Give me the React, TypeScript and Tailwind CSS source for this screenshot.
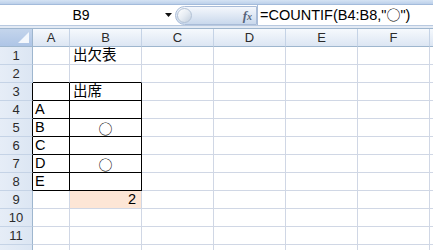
const cols = ["A", "B", "C", "D", "E", "F", "G"];
const colWidths = ["w-[37px]", "w-[72px]", "w-[72px]", "w-[72px]", "w-[72px]", "w-[72px]", "w-[72px]"];

type Cell = { text: string; align: "left" | "center" | "right"; circle?: boolean };

const data: Record<string, Cell> = {
  B1: { text: "出欠表", align: "left" },
  B3: { text: "出席", align: "left" },
  A4: { text: "A", align: "left" },
  A5: { text: "B", align: "left" },
  B5: { text: "○", align: "center", circle: true },
  A6: { text: "C", align: "left" },
  A7: { text: "D", align: "left" },
  B7: { text: "○", align: "center", circle: true },
  A8: { text: "E", align: "left" },
  B9: { text: "2", align: "right" },
};

const rows = Array.from({ length: 12 }, (_, i) => i + 1);

function inTable(col: number, row: number) {
  return col <= 1 && row >= 3 && row <= 8;
}

function SheetCell({ col, row }: { col: number; row: number }) {
  const key = cols[col] + row;
  const cell = data[key];
  const right = inTable(col, row) ? "border-r-black" : "border-r-[#d0d7e5]";
  const bottom =
    col <= 1 && row >= 2 && row <= 8 ? "border-b-black" : "border-b-[#d0d7e5]";
  const fill = key === "B9" ? "bg-[#fde6d6]" : "bg-white";
  const align =
    cell?.align === "right"
      ? "items-end justify-end pr-[5px]"
      : cell?.align === "center"
      ? "items-center justify-center"
      : col === 0
      ? "items-end justify-start pl-[2px]"
      : "items-end justify-start pl-[3px]";
  return (
    <div
      className={`${colWidths[col]} shrink-0 h-[18px] border-r border-b ${right} ${bottom} ${fill} flex ${align}`}
    >
      {cell && (
        <span
          className={
            cell.circle
              ? "text-[14px] leading-[16px] text-black font-['Noto_Sans_CJK_JP',sans-serif]"
              : "text-[14.5px] leading-[17px] text-black font-['Liberation_Sans','Noto_Sans_CJK_JP',sans-serif]"
          }
        >
          {cell.text}
        </span>
      )}
    </div>
  );
}

export default function App() {
  return (
    <div className="w-[433px] h-[250px] overflow-hidden bg-white font-['Liberation_Sans','Noto_Sans_CJK_JP',sans-serif]">
      {/* ribbon edge */}
      <div className="h-[5px] bg-gradient-to-b from-[#d5e3f4] to-[#bcd0ea] border-b border-[#a3bbdb]" />

      {/* formula bar */}
      <div className="h-[20px] flex items-center bg-white">
        <div className="w-[162px] h-full flex items-center justify-center text-[14px] text-black">
          B9
        </div>
        <div className="w-[13px] h-full flex items-center justify-center">
          <svg width="7" height="4" viewBox="0 0 7 4">
            <path d="M0 0 H7 L3.5 4 Z" fill="#111" />
          </svg>
        </div>
        <div className="w-[82px] h-[19px] rounded-l-full border border-[#a9bcd8] bg-gradient-to-b from-[#f4f7fc] via-[#dfe8f4] to-[#c9d8ec] flex items-center relative">
          <div className="ml-[1px] w-[15px] h-[15px] rounded-full border border-[#b3c2d6] bg-gradient-to-br from-[#ffffff] via-[#e6ecf3] to-[#c2cedd]" />
          <span className="absolute right-[4px] top-[0px] text-[13px] italic font-bold text-[#56647a] font-['Liberation_Serif',serif] leading-[17px]">
            f<span className="text-[10px]">x</span>
          </span>
        </div>
        <div className="flex-1 h-full border-l border-[#a9bcd8] flex items-center pl-[2px] text-[14.5px] leading-[18px] text-black whitespace-nowrap">
          =COUNTIF(B4:B8,"<span className="inline-block font-['Noto_Sans_CJK_JP',sans-serif] text-[14px] leading-[14px] -translate-y-[1px]">○</span>")
        </div>
      </div>

      {/* separator */}
      <div className="h-[4px] bg-[#e3eaf4] border-t border-[#b8c9e0] border-b border-b-[#9eb6ce]" />

      {/* column headers */}
      <div className="flex h-[18px]">
        <div className="w-[33px] shrink-0 h-full border-r border-b border-[#9eb6ce] bg-gradient-to-b from-[#c4d5ec] to-[#aec5e6] relative overflow-hidden">
          <svg className="absolute right-[3px] bottom-[3px]" width="11" height="11" viewBox="0 0 11 11">
            <path d="M11 0 V11 H0 Z" fill="#f4f8fd" />
          </svg>
        </div>
        {cols.map((c, i) => (
          <div
            key={c}
            className={`${colWidths[i]} shrink-0 h-full border-r border-b border-r-[#c5d3e6] border-b-[#9eb6ce] bg-gradient-to-b from-[#f6f9fd] to-[#dce6f3] flex items-center justify-center text-[13px] text-[#2b2b2b]`}
          >
            {i < 6 ? c : ""}
          </div>
        ))}
      </div>

      {/* rows */}
      {rows.map((r) => (
        <div key={r} className="flex h-[18px]">
          <div
            className={`w-[33px] shrink-0 h-full border-b border-r border-b-[#c5d3e6] ${
              r >= 3 && r <= 8 ? "border-r-black" : "border-r-[#9eb6ce]"
            } bg-gradient-to-r from-[#e6edf7] to-[#dce6f3] flex items-center justify-center text-[13px] text-[#2b2b2b]`}
          >
            {r < 12 ? r : ""}
          </div>
          {cols.map((_, ci) => (
            <SheetCell key={ci} col={ci} row={r} />
          ))}
        </div>
      ))}
    </div>
  );
}
